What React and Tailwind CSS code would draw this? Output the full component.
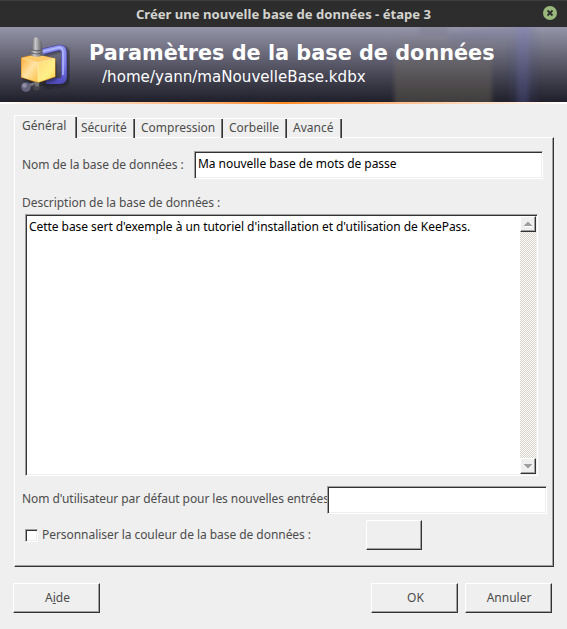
const raised = "border border-t-white border-l-white border-b-[#333336] border-r-[#333336] shadow-[inset_-1px_-1px_0_#a0a0a0] bg-[#efefef]";
const sunken = "border border-t-[#a0a0a0] border-l-[#a0a0a0] border-b-white border-r-white shadow-[inset_1px_1px_0_#333336,inset_-1px_-1px_0_#efefef] bg-white";

function Label({ children, className = "" }) {
  return <span className={`block whitespace-pre leading-[18px] ${className}`}>{children}</span>;
}

function Arrow({ down }) {
  return (
    <svg width="12" height="12" viewBox="0 0 12 12" shapeRendering="crispEdges" className={down ? "rotate-180" : ""}>
      <path d="M2 8h8v1H2z" fill={down ? "none" : "#fff"} />
      <path d="M5 4h2v1H5zM4 5h4v1H4zM3 6h6v1H3zM2 7h8v1H2z" fill="#a0a0a0" />
    </svg>
  );
}

function ClampIcon() {
  return (
    <svg width="52" height="60" viewBox="18 35 52 60">
      <defs>
        <linearGradient id="frame" x1="0" y1="0" x2="0" y2="1">
          <stop offset="0" stopColor="#9196f0" />
          <stop offset=".5" stopColor="#7f81e6" />
          <stop offset="1" stopColor="#524ec0" />
        </linearGradient>
        <linearGradient id="left" x1="0" y1="0" x2="1" y2="1">
          <stop offset="0" stopColor="#fdb23c" />
          <stop offset=".5" stopColor="#ffe3a6" />
          <stop offset="1" stopColor="#fbc040" />
        </linearGradient>
        <linearGradient id="right" x1="0" y1="0" x2="1" y2="1">
          <stop offset="0" stopColor="#ffd87a" />
          <stop offset=".6" stopColor="#fff08a" />
          <stop offset="1" stopColor="#ffd24a" />
        </linearGradient>
        <linearGradient id="metal">
          <stop offset="0" stopColor="#6e6e73" />
          <stop offset=".35" stopColor="#c9c9cb" />
          <stop offset="1" stopColor="#5c5c60" />
        </linearGradient>
        <filter id="soft" x="-20%" y="-20%" width="140%" height="140%">
          <feGaussianBlur stdDeviation="1.200" />
        </filter>
      </defs>
      <path d="M44 53l16-4q7 0 7 5v24q0 6-5 6l-18 2" fill="none" stroke="#15151d" strokeOpacity=".5" strokeWidth="6" filter="url(#soft)" />
      <path d="M41 52l18-4.500q5 0 5 5V76q0 5-4 5H46" fill="none" stroke="#4d4bac" strokeWidth="6" />
      <path d="M41 52l18-4.500q5 0 5 5V76q0 5-4 5H46" fill="none" stroke="url(#frame)" strokeWidth="4.600" />
      <path d="M42 51.500l17-4q4 0 4 5V75" fill="none" stroke="#b5bbff" strokeWidth="1.400" />
      <path d="M23 62l16 5 17-5v18l-17 6-15-5z" fill="#111" fillOpacity=".5" filter="url(#soft)" />
      <path d="M21 57.500l14-3.500 20.500 4.500v18.500L38 83l-17-5.500z" fill="#d98d1c" />
      <path d="M21.500 58.500L38 62.500V82.300l-16.500-5.300z" fill="url(#left)" />
      <path d="M38 62.500l17-4v18L38 82.300z" fill="url(#right)" />
      <path d="M21.500 58l15-3.500 18.500 4-17 4z" fill="#ffcb6b" />
      <path d="M22 58.500l16 4 16.500-4M38 62.500V81" fill="none" stroke="#fff0bd" strokeWidth=".7" />
      <path d="M32 46q0-7 4-9 6 2 6 10l-.500 3H32z" fill="url(#metal)" />
      <path d="M30.500 49.500q6 2 12 0v6q-6 2.500-12 0z" fill="url(#metal)" />
      <path d="M31 49.800q6 2.200 11.500 0M30.500 52.800q6 2.500 12 0" fill="none" stroke="#535358" strokeWidth=".8" />
      <path d="M26 86l11-3" stroke="#77777d" strokeWidth="2.500" />
      <circle cx="26" cy="87" r="4.800" fill="#64647c" />
      <circle cx="24.500" cy="85.500" r="2.300" fill="#8f8fa8" />
      <circle cx="36.500" cy="87" r="3.500" fill="#45454b" />
      <path d="M34.500 82.500h5l-1 4h-3z" fill="#77777a" />
    </svg>
  );
}

function BannerGhost() {
  return (
    <svg width="190" height="75" viewBox="0 0 190 75" className="absolute right-0 top-0">
      <defs>
        <linearGradient id="gb" x1="0" y1="0" x2="0" y2="1">
          <stop offset="0" stopColor="#8c8474" stopOpacity="0" />
          <stop offset=".4" stopColor="#847962" stopOpacity=".28" />
          <stop offset="1" stopColor="#80785f" stopOpacity=".36" />
        </linearGradient>
        <filter id="gf" filterUnits="userSpaceOnUse" x="-10" y="-20" width="210" height="120">
          <feGaussianBlur stdDeviation="2" />
        </filter>
      </defs>
      <g filter="url(#gf)">
        <path d="M42 -10h29v18H42z" fill="#555566" fillOpacity=".16" />
        <path d="M72 6L140-4h20v99H132V12L72 17z" fill="#4f5290" fillOpacity=".1" />
        <path d="M17 10l47-5 51 6v84H17z" fill="url(#gb)" />
        <path d="M140-10h12V95h-12z" fill="#7175cf" fillOpacity=".2" />
      </g>
    </svg>
  );
}

const tabs = [
  ["Sécurité", "w-[58px] pl-[4px]"],
  ["Compression", "w-[88px] pl-[6px]"],
  ["Corbeille", "w-[64px] pl-[6px]"],
  ["Avancé", "w-[55px] pl-[6px]"],
];

export default function App() {
  return (
    <div className="flex h-[629px] w-[567px] flex-col overflow-hidden bg-[#efefef] font-['Noto_Sans',sans-serif] text-[12px] text-[#4c4c4c]">
      <header className="relative flex h-[27px] shrink-0 items-center justify-center border-t border-[#3d3d3d] bg-[#2d2d2d]">
        <h1 className="whitespace-pre text-[13.100px] font-bold leading-[18px] text-[#d3d3cf]">Créer une nouvelle base de données - étape 3</h1>
        <svg width="14" height="14" viewBox="0 0 14 14" className="absolute right-[10px] top-[5px]">
          <circle cx="7" cy="7" r="7" fill="#9ab87c" />
          <path d="M4.500 4.500l5 5M9.500 4.500l-5 5" stroke="#2d2d2d" strokeWidth="1.800" />
        </svg>
      </header>
      <div className="relative flex h-[75px] shrink-0 bg-linear-to-b from-[#9696aa] to-[#20202b] pl-[18px] pt-[8px] text-white">
        <BannerGhost />
        <ClampIcon />
        <div className="relative pl-[19px] font-['DejaVu_Sans',sans-serif]">
          <h2 className="mt-[5px] whitespace-pre text-[20.800px] font-bold leading-[26px]">Paramètres de la base de données</h2>
          <p className="ml-[13px] whitespace-pre pt-px text-[15.100px] leading-[20px]">/home/yann/maNouvelleBase.kdbx</p>
        </div>
      </div>
      <div className="h-[2px] shrink-0 bg-linear-to-r from-white via-[#ff8c1e] to-white" />

      <main className="flex flex-col pl-[14px] pt-[11px]">
        <nav className="relative z-10 -mb-px flex h-[23px] items-end">
          <div className="flex h-[23px] w-[63px] rounded-tl-[2px] border-l border-t border-white border-r-0 bg-[#efefef] pl-[7px]">
            <Label className="w-[54px] pt-px">Général</Label>
            <i className="mt-px h-[21px] w-[2px] shrink-0 border-l border-r border-l-[#777] border-r-[#333336]" />
          </div>
          {tabs.map(([name, size]) => (
            <div key={name} className={`mt-[3px] flex h-[20px] justify-between self-start rounded-tl-[2px] border-t border-white ${size}`}>
              <Label>{name}</Label>
              <i className="h-[19px] w-[2px] shrink-0 border-l border-r border-l-[#777] border-r-[#333336]" />
            </div>
          ))}
        </nav>
        <section className={`flex h-[430px] w-[540px] flex-col tracking-[-0.05px] ${raised}`}>
          <div className="flex h-[41px] pt-[13px]">
            <Label className="w-[179px] pl-[7px] pt-[5px]">Nom de la base de données :</Label>
            <div className={`h-[28px] w-[349px] pl-[3px] pt-[3px] text-black ${sunken}`}><Label>Ma nouvelle base de mots de passe</Label></div>
          </div>
          <Label className="h-[35px] pl-[7px] pt-[15px]">Description de la base de données :</Label>
          <div className={`ml-[10px] flex h-[262px] w-[513px] justify-between pb-px pl-[3px] pr-px pt-px text-black ${sunken}`}>
            <Label className="pt-[2px]">Cette base sert d'exemple à un tutoriel d'installation et d'utilisation de KeePass.</Label>
            <div className="flex w-[16px] shrink-0 flex-col justify-between bg-[repeating-conic-gradient(#d4d0c8_0_25%,#fff_0_50%)] bg-size-[2px_2px]">
              <div className={`flex h-[16px] w-[16px] items-center justify-center ${raised}`}><Arrow /></div>
              <div className={`flex h-[16px] w-[16px] items-center justify-center ${raised}`}><Arrow down /></div>
            </div>
          </div>
          <div className="flex h-[38px] pt-[10px]">
            <Label className="w-[312px] pl-[7px] pt-[4px] tracking-[-0.07px]">Nom d'utilisateur par défaut pour les nouvelles entrées</Label>
            <div className={`h-[28px] w-[220px] shrink-0 ${sunken}`} />
          </div>
          <div className="flex pt-[6px]">
            <div className={`ml-[10px] mt-[9px] h-[13px] w-[13px] ${sunken}`} />
            <Label className="w-[328px] pl-[4px] pt-[6px]">Personnaliser la couleur de la base de données :</Label>
            <div className={`h-[30px] w-[56px] ${raised}`} />
          </div>
        </section>
        <footer className="-ml-px mt-[16px] flex w-[539px] gap-[7px]">
          <button className={`mr-auto h-[30px] w-[87px] pl-[2px] ${raised}`}>A<span className="underline">i</span>de</button>
          <button className={`h-[30px] w-[87px] pl-[2px] ${raised}`}>OK</button>
          <button className={`h-[30px] w-[87px] pl-px ${raised}`}>Annuler</button>
        </footer>
      </main>
    </div>
  );
}
